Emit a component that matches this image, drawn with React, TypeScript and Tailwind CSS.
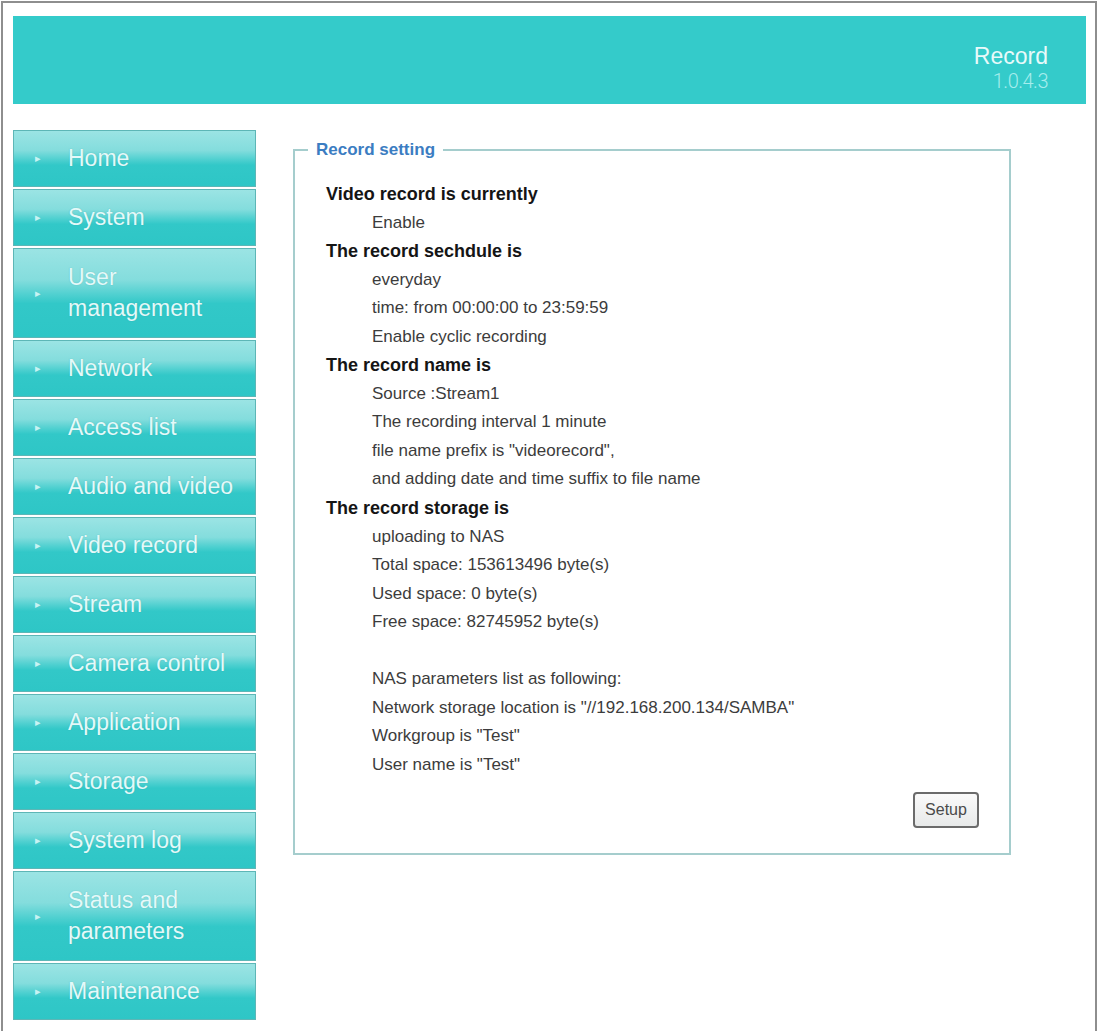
const menu: { label: string[] }[] = [
  { label: ['Home'] },
  { label: ['System'] },
  { label: ['User', 'management'] },
  { label: ['Network'] },
  { label: ['Access list'] },
  { label: ['Audio and video'] },
  { label: ['Video record'] },
  { label: ['Stream'] },
  { label: ['Camera control'] },
  { label: ['Application'] },
  { label: ['Storage'] },
  { label: ['System log'] },
  { label: ['Status and', 'parameters'] },
  { label: ['Maintenance'] },
];

type Line = { text: string; bold?: boolean };

const lines: Line[] = [
  { text: 'Video record is currently', bold: true },
  { text: 'Enable' },
  { text: 'The record sechdule is', bold: true },
  { text: 'everyday' },
  { text: 'time: from 00:00:00 to 23:59:59' },
  { text: 'Enable cyclic recording' },
  { text: 'The record name is', bold: true },
  { text: 'Source :Stream1' },
  { text: 'The recording interval 1 minute' },
  { text: 'file name prefix is "videorecord",' },
  { text: 'and adding date and time suffix to file name' },
  { text: 'The record storage is', bold: true },
  { text: 'uploading to NAS' },
  { text: 'Total space: 153613496 byte(s)' },
  { text: 'Used space: 0 byte(s)' },
  { text: 'Free space: 82745952 byte(s)' },
  { text: '' },
  { text: 'NAS parameters list as following:' },
  { text: 'Network storage location is "//192.168.200.134/SAMBA"' },
  { text: 'Workgroup is "Test"' },
  { text: 'User name is "Test"' },
];

function MenuItem({ label }: { label: string[] }) {
  const tall = label.length > 1;
  return (
    <a
      href="#"
      className={`flex w-[243px] items-center border border-[#5db6b6] bg-[linear-gradient(to_bottom,#9be4e4_0%,#84dddd_35%,#4fd0d0_52%,#32c8c8_62%,#2ec6c6_100%)] ${
        tall ? 'h-[90px]' : 'h-[57px]'
      }`}
    >
      <span className="w-[54px] pl-[21px] text-[11px] leading-none text-[#c8f3f3]">{'\u25B8'}</span>
      <span className="flex flex-col text-[23px] leading-[31px] text-[#e4f9f9] [text-shadow:0_0_1px_rgba(40,150,150,0.5)]">
        {label.map((l) => (
          <span key={l}>{l}</span>
        ))}
      </span>
    </a>
  );
}

export default function App() {
  return (
    <div className="min-h-[1031px] bg-white px-px pt-px font-['Liberation_Sans',Arial,sans-serif]">
      <div className="min-h-[1030px] border-x-2 border-t-2 border-[#8e8e8e] pl-[10px] pr-[9px] pt-[13px]">
        <header className="flex h-[88px] flex-col items-end bg-[#34cbca] pr-[38px] pt-[28px]">
          <span className="text-[23px] leading-[25px] text-[#e8fafa]">Record</span>
          <span className="font-['Roboto',sans-serif] text-[20px] font-light leading-[25px] tracking-[-0.5px] text-[#a6eded]">
            1.0.4.3
          </span>
        </header>

        <div className="flex items-start gap-[37px]">
          <nav className="mt-[26px] flex flex-col gap-[2px]">
            {menu.map((m) => (
              <MenuItem key={m.label.join(' ')} label={m.label} />
            ))}
          </nav>

          <fieldset className="mt-[36px] w-[718px] border-2 border-[#a5cdcd] p-0">
            <legend className="ml-[13px] px-[8px] text-[17px] font-bold leading-[20px] text-[#3b7dc2]">
              Record setting
            </legend>
            <div className="pb-[25px] pl-[31px] pr-[30px] pt-[20px]">
              {lines.map((l, i) =>
                l.bold ? (
                  <div key={i} className="text-[18px] font-bold leading-[28.55px] text-[#151515]">
                    {l.text}
                  </div>
                ) : (
                  <div key={i} className="h-[28.55px] pl-[46px] text-[17px] leading-[28.55px] text-[#3c3c3c]">
                    {l.text}
                  </div>
                ),
              )}
              <div className="mt-[13px] flex justify-end">
                <button
                  type="button"
                  className="h-[36px] w-[66px] rounded-[4px] border-2 border-[#6b6b6b] bg-[linear-gradient(to_bottom,#fafafa,#e8eaea)] text-[16px] text-[#4a4a4a]"
                >
                  Setup
                </button>
              </div>
            </div>
          </fieldset>
        </div>
      </div>
    </div>
  );
}
